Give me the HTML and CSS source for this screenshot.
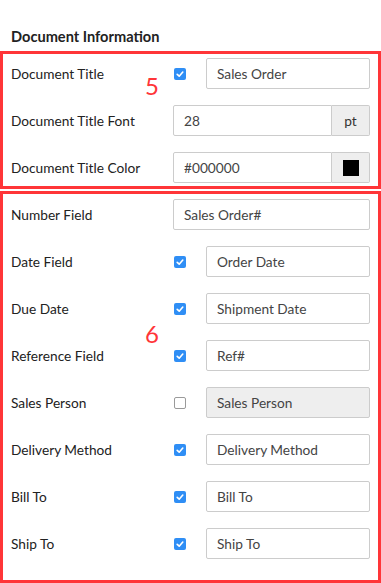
FILE: index.html
```html
<!DOCTYPE html>
<html lang="en">
<head>
  <meta charset="UTF-8">
  <meta name="viewport" content="width=device-width, initial-scale=1.0">
  <title>Document Information</title>
  <link rel="stylesheet" href="styles.css">
</head>
<body>
  <h3 class="section-title">Document Information</h3>

  <div class="group">
    <span class="marker">5</span>
    <div class="row">
      <label class="label">Document Title</label>
      <span class="check on"><svg viewBox="0 0 12 12"><path d="M3.2 6.3 L5.2 8.2 L8.8 4" /></svg></span>
      <input class="field" type="text" value="Sales Order">
    </div>
    <div class="row">
      <label class="label">Document Title Font</label>
      <div class="input-group">
        <input class="field" type="text" value="28">
        <span class="addon">pt</span>
      </div>
    </div>
    <div class="row">
      <label class="label">Document Title Color</label>
      <div class="input-group">
        <input class="field" type="text" value="#000000">
        <span class="addon"><span class="swatch"></span></span>
      </div>
    </div>
  </div>

  <div class="group group-fields">
    <span class="marker marker-six">6</span>
    <div class="row">
      <label class="label">Number Field</label>
      <input class="field" type="text" value="Sales Order#">
    </div>
    <div class="row">
      <label class="label">Date Field</label>
      <span class="check on"><svg viewBox="0 0 12 12"><path d="M3.2 6.3 L5.2 8.2 L8.8 4" /></svg></span>
      <input class="field" type="text" value="Order Date">
    </div>
    <div class="row">
      <label class="label">Due Date</label>
      <span class="check on"><svg viewBox="0 0 12 12"><path d="M3.2 6.3 L5.2 8.2 L8.8 4" /></svg></span>
      <input class="field" type="text" value="Shipment Date">
    </div>
    <div class="row">
      <label class="label">Reference Field</label>
      <span class="check on"><svg viewBox="0 0 12 12"><path d="M3.2 6.3 L5.2 8.2 L8.8 4" /></svg></span>
      <input class="field" type="text" value="Ref#">
    </div>
    <div class="row">
      <label class="label">Sales Person</label>
      <span class="check"></span>
      <input class="field" type="text" value="Sales Person" disabled>
    </div>
    <div class="row">
      <label class="label">Delivery Method</label>
      <span class="check on"><svg viewBox="0 0 12 12"><path d="M3.2 6.3 L5.2 8.2 L8.8 4" /></svg></span>
      <input class="field" type="text" value="Delivery Method">
    </div>
    <div class="row">
      <label class="label">Bill To</label>
      <span class="check on"><svg viewBox="0 0 12 12"><path d="M3.2 6.3 L5.2 8.2 L8.8 4" /></svg></span>
      <input class="field" type="text" value="Bill To">
    </div>
    <div class="row">
      <label class="label">Ship To</label>
      <span class="check on"><svg viewBox="0 0 12 12"><path d="M3.2 6.3 L5.2 8.2 L8.8 4" /></svg></span>
      <input class="field" type="text" value="Ship To">
    </div>
  </div>
</body>
</html>
```

FILE: styles.css
```css
body {
  margin: 0;
  font-family: Lato, "Open Sans", Arial, sans-serif;
  font-size: 13.7px;
  color: #222;
  background: #fff;
}
.section-title {
  margin: 0;
  padding: 29px 11px 0;
  height: 22px;
  font-size: 14.6px;
  font-weight: bold;
  line-height: 16px;
  color: #222;
}
.group {
  position: relative;
  border: 3px solid #ff3538;
  padding: 4px 8px 3px 8px;
  display: flex;
  flex-direction: column;
  gap: 16px;
}
.group-fields {
  margin-top: 2px;
  padding-top: 5px;
  padding-bottom: 21px;
}
.marker {
  position: absolute;
  left: 142px;
  top: 20px;
  font-size: 24px;
  line-height: 24px;
  color: #ff3538;
}
.marker-six {
  top: 128px;
}
.row {
  display: flex;
  align-items: center;
  height: 31px;
}
.label {
  width: 162px;
  flex: none;
}
.check {
  width: 12px;
  height: 12px;
  margin: 0 20px 0 1px;
  flex: none;
  box-sizing: border-box;
  border: 1px solid #9a9a9a;
  border-radius: 2px;
  background: #fff;
}
.check.on {
  border: none;
  background: #2f8ef5;
}
.check svg {
  display: block;
  width: 12px;
  height: 12px;
  fill: none;
  stroke: #fff;
  stroke-width: 1.6;
  stroke-linecap: round;
  stroke-linejoin: round;
}
.field {
  flex: 1;
  width: 0;
  min-width: 0;
  height: 31px;
  box-sizing: border-box;
  border: 1px solid #ccc;
  border-radius: 2px;
  padding: 0 10px;
  font-family: inherit;
  font-size: 13.7px;
  color: #444;
  background: #fff;
  outline: none;
}
.field:disabled {
  background: #eee;
  color: #444;
}
.input-group {
  flex: 1;
  min-width: 0;
  display: flex;
  height: 31px;
}
.input-group .field {
  border-radius: 2px 0 0 2px;
}
.addon {
  width: 38px;
  flex: none;
  box-sizing: border-box;
  display: flex;
  align-items: center;
  justify-content: center;
  border: 1px solid #ccc;
  border-left: none;
  border-radius: 0 2px 2px 0;
  background: #eee;
  color: #333;
}
.swatch {
  width: 16px;
  height: 16px;
  background: #000;
}
```
